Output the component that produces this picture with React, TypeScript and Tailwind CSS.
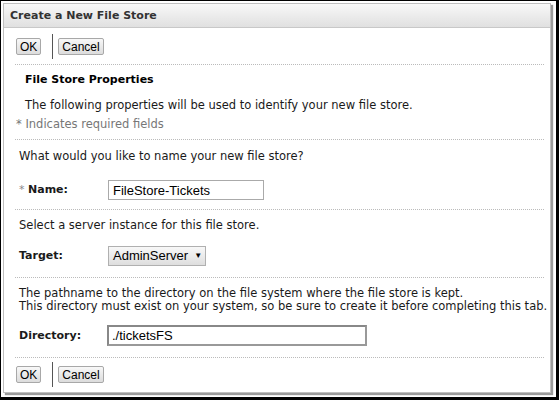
import React from "react";

const verdana = { fontFamily: '"DejaVu Sans", Verdana, sans-serif' };

function Btn({ label }: { label: string }) {
    return (
        <button
            type="button"
            className="h-[17px] px-[3px] border border-[#a8a8a8] rounded-[2px] bg-gradient-to-b from-[#f8f8f8] to-[#dcdcdc] text-[12px] leading-none text-black font-['Liberation_Sans',Arial,sans-serif]"
        >
            {label}
        </button>
    );
}

function ButtonBar() {
    return (
        <div className="flex items-center h-[25px] pl-[12px]">
            <Btn label="OK" />
            <div className="w-px h-[25px] bg-[#555] ml-[11px] mr-[5px]" />
            <Btn label="Cancel" />
        </div>
    );
}

function Dots() {
    return <div className="border-t border-dotted border-[#bbb] ml-[11px] mr-[6px]" />;
}

export default function App() {
    return (
        <div className="w-[559px] h-[400px] bg-white border-black border-l border-t border-r-[3px] border-b-[3px] pl-[2px] pt-[2px]">
            <div
                className="w-[548px] h-[390px] border border-[#bfbfbf] bg-white shadow-[2px_2px_1px_#9a9a9a] text-[11.5px] leading-[14px] text-[#1a1a1a]"
                style={verdana}
            >
                {/* Header */}
                <div className="h-[24px] flex items-center pl-[6px] border-b border-[#c8c8c8] bg-gradient-to-b from-[#f8f8f8] to-[#e0e0e0]">
                    <span className="font-bold text-[11px] text-[#333]">Create a New File Store</span>
                </div>

                <div className="pt-[6px]">
                    <ButtonBar />
                </div>
                <div className="pt-[5px]">
                    <Dots />
                </div>

                {/* Properties intro */}
                <div className="pl-[21px] pt-[8px] font-bold text-[11px] text-black">File Store Properties</div>
                <div className="pl-[21px] pt-[11px]">The following properties will be used to identify your new file store.</div>
                <div className="pl-[12px] pt-[5px] text-[#777]">* Indicates required fields</div>
                <div className="pt-[8px]">
                    <Dots />
                </div>

                {/* Name */}
                <div className="pl-[15px] pt-[9px]">What would you like to name your new file store?</div>
                <div className="flex items-center pl-[15px] pt-[17px]">
                    <div className="w-[89px] font-bold text-[11px]">
                        <span className="text-[#888] font-normal">* </span>Name:
                    </div>
                    <input
                        type="text"
                        readOnly
                        value="FileStore-Tickets"
                        className="w-[156px] h-[20px] border border-[#aaa] px-[4px] text-[13px] text-black outline-none font-['Liberation_Sans',Arial,sans-serif]"
                    />
                </div>
                <div className="pt-[9px]">
                    <Dots />
                </div>

                {/* Target */}
                <div className="pl-[15px] pt-[8px]">Select a server instance for this file store.</div>
                <div className="flex items-center pl-[15px] pt-[14px]">
                    <div className="w-[89px] font-bold text-[11px]">Target:</div>
                    <div className="w-[98px] h-[20px] flex items-center gap-[6px] px-[4px] border border-[#b0b0b0] bg-gradient-to-b from-[#f8f8f8] to-[#dedede] text-[13px] text-black font-['Liberation_Sans',Arial,sans-serif]">
                        AdminServer
                        <span className="text-[8px]">▼</span>
                    </div>
                </div>
                <div className="pt-[11px]">
                    <Dots />
                </div>

                {/* Directory */}
                <div className="pl-[15px] pt-[9px] leading-[12.5px]">
                    The pathname to the directory on the file system where the file store is kept.
                    <br />
                    This directory must exist on your system, so be sure to create it before completing this tab.
                </div>
                <div className="flex items-center pl-[15px] pt-[13px]">
                    <div className="w-[88px] font-bold text-[11px]">Directory:</div>
                    <input
                        type="text"
                        readOnly
                        value="./ticketsFS"
                        className="w-[260px] h-[21px] border-2 border-[#888] border-r-[#999] border-b-[#999] px-[3px] text-[13px] text-black outline-none font-['Liberation_Sans',Arial,sans-serif]"
                    />
                </div>
                <div className="pt-[11px]">
                    <Dots />
                </div>

                <div className="pt-[4px]">
                    <ButtonBar />
                </div>
            </div>
        </div>
    );
}
